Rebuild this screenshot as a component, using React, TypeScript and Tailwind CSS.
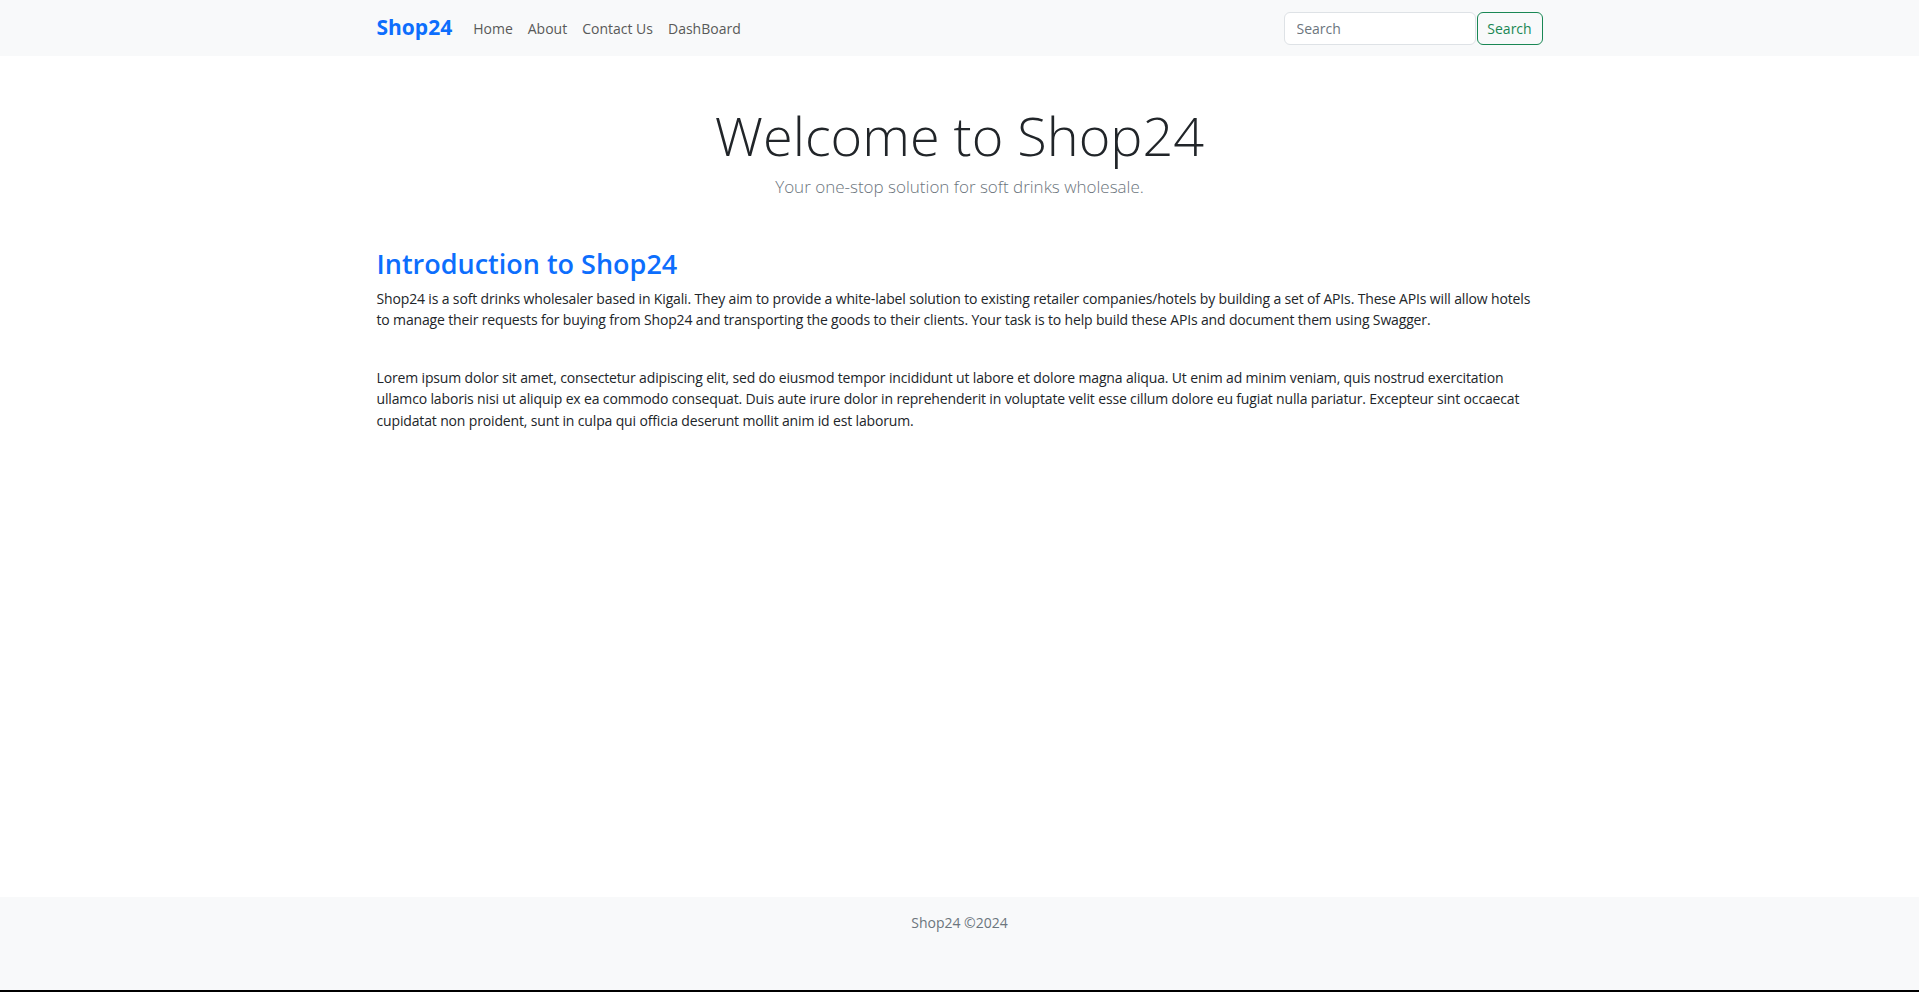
import { useState } from 'react';

const navLinks = ['Home', 'About', 'Contact Us', 'DashBoard'];

const intro =
  'Shop24 is a soft drinks wholesaler based in Kigali. They aim to provide a white-label solution to existing retailer companies/hotels by building a set of APIs. These APIs will allow hotels to manage their requests for buying from Shop24 and transporting the goods to their clients. Your task is to help build these APIs and document them using Swagger.';

const lorem =
  'Lorem ipsum dolor sit amet, consectetur adipiscing elit, sed do eiusmod tempor incididunt ut labore et dolore magna aliqua. Ut enim ad minim veniam, quis nostrud exercitation ullamco laboris nisi ut aliquip ex ea commodo consequat. Duis aute irure dolor in reprehenderit in voluptate velit esse cillum dolore eu fugiat nulla pariatur. Excepteur sint occaecat cupidatat non proident, sunt in culpa qui officia deserunt mollit anim id est laborum.';

function Navbar() {
  const [query, setQuery] = useState('');

  return (
    <nav className="h-[56px] bg-[#f8f9fa]">
      <div className="w-[1166px] mx-auto h-full flex items-center">
        <a href="#" className="text-[21px] font-bold text-[#0d6efd] mr-[21px]">
          Shop24
        </a>
        <ul className="flex items-center gap-[15px]">
          {navLinks.map((link) => (
            <li key={link}>
              <a href="#" className="text-[14px] text-[#595959] hover:text-black">
                {link}
              </a>
            </li>
          ))}
        </ul>

        <form className="ml-auto flex items-center gap-[1px]" onSubmit={(e) => e.preventDefault()}>
          <input
            type="search"
            value={query}
            onChange={(e) => setQuery(e.target.value)}
            placeholder="Search"
            className="w-[192px] h-[33px] px-[12px] text-[14px] bg-white border border-[#dee2e6] rounded-[6px] text-[#212529] placeholder:text-[#6c757d] outline-none"
          />
          <button
            type="submit"
            className="w-[66px] h-[33px] text-[14px] text-[#198754] border border-[#198754] rounded-[6px] hover:bg-[#198754] hover:text-white"
          >
            Search
          </button>
        </form>
      </div>
    </nav>
  );
}

export default function App() {
  return (
    <div className="min-h-screen flex flex-col bg-white text-[#212529] font-['Segoe_UI','Open_Sans',sans-serif]">
      <Navbar />

      <main className="flex-1">
        <div className="w-[1166px] mx-auto">
          {/* Hero */}
          <header className="text-center pt-[47px]">
            <h1 className="text-[54px] leading-[1.2] font-light">Welcome to Shop24</h1>
            <p className="text-[17px] font-light text-[#6c757d] mt-[6px]">
              Your one-stop solution for soft drinks wholesale.
            </p>
          </header>

          {/* Intro */}
          <section className="mt-[49px]">
            <h2 className="text-[27px] leading-[1.2] font-semibold text-[#0d6efd]">Introduction to Shop24</h2>
            <p className="mt-[7px] text-[14px] tracking-[-0.15px] leading-[21.6px]">{intro}</p>
            <p className="mt-[36px] text-[14px] tracking-[-0.15px] leading-[21.6px]">{lorem}</p>
          </section>
        </div>
      </main>

      <footer className="h-[95px] bg-[#f8f9fa] pt-[15px] border-b-2 border-black">
        <p className="text-center text-[14px] leading-[21.6px] text-[#6c757d]">Shop24 ©2024</p>
      </footer>
    </div>
  );
}
